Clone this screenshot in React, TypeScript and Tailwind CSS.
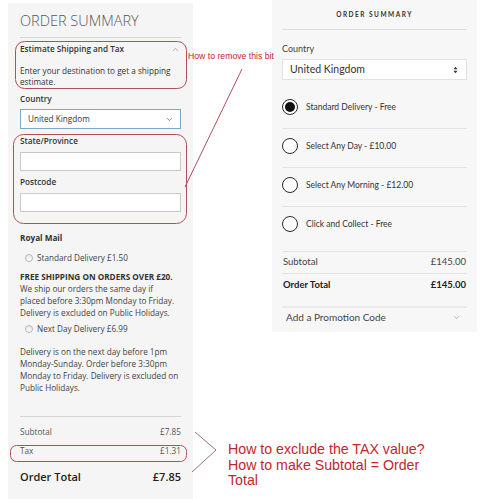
import { ChevronDown, ChevronUp } from 'lucide-react'

const sans = "font-['Open_Sans','Liberation_Sans',sans-serif]"
const lato = "font-['Lato','Liberation_Sans',sans-serif]"

function SmallRadio() {
  return (
    <span className="w-[8px] h-[8px] rounded-full border border-[#b5b5b5] bg-gradient-to-b from-[#e9e9e9] to-[#fdfdfd] shrink-0" />
  )
}

function LeftSummary() {
  return (
    <div className={`${sans} w-[185px] h-[496px] mt-[3px] ml-[8px] bg-[#f5f5f5] px-[12px] pt-[9px] text-[#333] text-[8.2px]`}>
      <div className="text-[14.5px] leading-[18px] font-light text-[#575757]">ORDER SUMMARY</div>
      <div className="mt-[7px] border-t border-[#d6d6d6]" />

      <div className="mt-[5px] flex items-center justify-between leading-[12px] font-semibold">
        <span>Estimate Shipping and Tax</span>
        <ChevronUp size={9} strokeWidth={1.5} className="text-[#777] mr-[1px]" />
      </div>
      <div className="mt-[10px] leading-[11px]">
        <div className="whitespace-nowrap">Enter your destination to get a shipping</div>
        <div>estimate.</div>
      </div>

      <div className="mt-[6px] leading-[12px] font-semibold">Country</div>
      <div className="mt-[4px] h-[20px] flex items-center justify-between bg-white border border-[#7fa8c4] pl-[7px] pr-[6px]">
        <span>United Kingdom</span>
        <ChevronDown size={9} strokeWidth={1.8} className="text-[#555]" />
      </div>

      <div className="mt-[6px] leading-[12px] font-semibold">State/Province</div>
      <div className="mt-[5px] h-[19px] bg-white border border-[#c9c9c9]" />
      <div className="mt-[5px] leading-[12px] font-semibold">Postcode</div>
      <div className="mt-[5px] h-[19px] bg-white border border-[#c9c9c9]" />

      <div className="mt-[20px] leading-[12px] font-bold">Royal Mail</div>
      <div className="mt-[8px] leading-[12px] flex items-center gap-[4px] pl-[5px] text-[#444]">
        <SmallRadio />
        <span>Standard Delivery £1.50</span>
      </div>
      <div className="mt-[7px] leading-[12px] text-[#444] whitespace-nowrap">
        <div className="font-bold text-[#333]">FREE SHIPPING ON ORDERS OVER £20.</div>
        <div>We ship our orders the same day if</div>
        <div>placed before 3:30pm Monday to Friday.</div>
        <div>Delivery is excluded on Public Holidays.</div>
      </div>
      <div className="mt-[4px] leading-[12px] flex items-center gap-[4px] pl-[5px] text-[#444]">
        <SmallRadio />
        <span>Next Day Delivery £6.99</span>
      </div>
      <div className="mt-[11px] leading-[12px] text-[#444] whitespace-nowrap">
        <div>Delivery is on the next day before 1pm</div>
        <div>Monday-Sunday. Order before 3:30pm</div>
        <div>Monday to Friday. Delivery is excluded on</div>
        <div>Public Holidays.</div>
      </div>

      <div className="mt-[22px] border-t border-[#d6d6d6]" />
      <div className="mt-[9px] leading-[12px] flex justify-between text-[8.2px] text-[#555]">
        <span>Subtotal</span>
        <span>£7.85</span>
      </div>
      <div className="mt-[7px] leading-[12px] flex justify-between text-[8.2px] text-[#555]">
        <span>Tax</span>
        <span>£1.31</span>
      </div>
      <div className="mt-[10px] leading-[20px] flex justify-between text-[11px] font-semibold text-[#222]">
        <span>Order Total</span>
        <span>£7.85</span>
      </div>
    </div>
  )
}

const options = [
  { label: 'Standard Delivery - Free', checked: true },
  { label: 'Select Any Day - £10.00', checked: false },
  { label: 'Select Any Morning - £12.00', checked: false },
  { label: 'Click and Collect - Free', checked: false },
]

function RightSummary() {
  return (
    <div className={`${lato} w-[205px] h-[332px] ml-[79px] bg-[#f7f7f7] px-[10px] pt-[9px] text-[#333]`}>
      <div className="text-center text-[6.5px] leading-[12px] font-bold tracking-[1.5px] text-[#333]">ORDER SUMMARY</div>
      <div className="mt-[8px] border-t border-[#dedede]" />

      <div className="mt-[13px] text-[9px] leading-[12px] text-[#444]">Country</div>
      <div className="mt-[4px] h-[21px] flex items-center justify-between bg-white border border-[#e2e2e2] pl-[7px] pr-[8px] text-[10.5px] text-[#333]">
        <span>United Kingdom</span>
        <svg width="5" height="8" viewBox="0 0 5 8" className="text-[#333]">
          <path d="M0.5 3.2 L2.5 0.8 L4.5 3.2 Z M0.5 4.8 L2.5 7.2 L4.5 4.8 Z" fill="currentColor" />
        </svg>
      </div>

      <div className="mt-[10px]">
        {options.map((o, i) => (
          <div
            key={o.label}
            className={
              i === 3
                ? 'h-[45px] pb-[10px] flex items-center gap-[8px] border-b border-[#e4e4e4]'
                : 'h-[39px] pb-[4px] flex items-center gap-[8px] border-b border-[#e4e4e4]'
            }
          >
            <span className="w-[16px] h-[16px] rounded-full border-[1.5px] border-[#2a2a2a] bg-white flex items-center justify-center shrink-0">
              {o.checked && <span className="w-[10px] h-[10px] rounded-full bg-[#111]" />}
            </span>
            <span className="text-[8.5px] text-[#333]">{o.label}</span>
          </div>
        ))}
      </div>

      <div className="h-[22px] flex items-center justify-between border-b border-[#e4e4e4] text-[9.5px] text-[#444] pl-[1px] pr-[1px]">
        <span>Subtotal</span>
        <span>£145.00</span>
      </div>
      <div className="h-[22px] flex items-center justify-between text-[9.5px] font-bold text-[#222] pl-[1px] pr-[1px]">
        <span>Order Total</span>
        <span>£145.00</span>
      </div>
      <div className="mt-[10px] border-t-2 border-[#ececec] h-[21px] flex items-center justify-between pl-[4px] pr-[6px] text-[10px] text-[#444]">
        <span>Add a Promotion Code</span>
        <ChevronDown size={9} strokeWidth={1.2} className="text-[#666]" />
      </div>
    </div>
  )
}

function Annotations() {
  return (
    <>
      <svg className="absolute inset-0 pointer-events-none" width="494" height="499" viewBox="0 0 494 499">
        <g fill="none" stroke="#b0505c" strokeWidth="1">
          <rect x="15.5" y="41.5" width="171" height="47" rx="9" />
          <rect x="13.5" y="134.5" width="173" height="89" rx="10" />
          <rect x="10.5" y="445.5" width="176" height="16" rx="6" />
          <path d="M242 69 L185 187" />
          <path d="M195 432 L216 450 L192 472" stroke="#a0707a" />
        </g>
      </svg>
      <div className="absolute left-[188px] top-[50px] font-['Liberation_Sans',sans-serif] text-[8.7px] leading-[12px] text-[#c0272d] whitespace-nowrap">
        How to remove this bit
      </div>
      <div className="absolute left-[228px] top-[442px] font-['Liberation_Sans',sans-serif] text-[14.2px] leading-[15.5px] text-[#c0272d] whitespace-nowrap">
        <div>How to exclude the TAX value?</div>
        <div>How to make Subtotal = Order</div>
        <div>Total</div>
      </div>
    </>
  )
}

export default function App() {
  return (
    <div className="relative w-[494px] h-[499px] bg-white flex items-start overflow-hidden">
      <LeftSummary />
      <RightSummary />
      <Annotations />
    </div>
  )
}
